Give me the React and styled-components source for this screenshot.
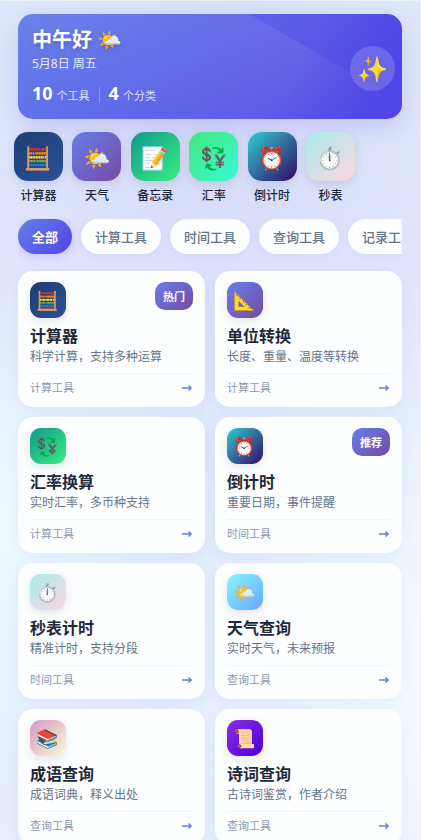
import React, { useState } from "react";
import styled, { createGlobalStyle } from "styled-components";

const GlobalStyle = createGlobalStyle`
  *, *::before, *::after { box-sizing: border-box; }
  html { scrollbar-width: none; }
  body {
    margin: 0;
    font-family: "Noto Sans", "Noto Sans CJK SC", "Noto Color Emoji", sans-serif;
    color: #1e293b;
    background: #e3e9fb;
  }
  button, a { font: inherit; color: inherit; }
`;

const Page = styled.main`
  display: flex;
  flex-direction: column;
  min-height: 100vh;
  padding: 13px 18px 0;
  border-top: 1px solid #eef1f8;
  border-right: 1px solid #eef1f8;
  background:
    radial-gradient(circle at 50% 15%, rgba(200, 205, 246, 0.45), transparent 210px),
    radial-gradient(ellipse at 0% 62%, rgba(238, 250, 255, 0.95), transparent 220px),
    radial-gradient(ellipse at 100% 80%, rgba(244, 252, 255, 0.95), transparent 260px),
    linear-gradient(180deg, #dde7f8 0%, #dfe3fc 28%, #e0eafc 55%, #e8eefd 100%);
`;

const Banner = styled.header`
  display: flex;
  align-items: center;
  justify-content: space-between;
  padding: 14px 7px 11px 14px;
  border-radius: 15px;
  color: #fff;
  background:
    linear-gradient(120deg, rgba(79, 70, 229, 0) 70%, rgba(79, 70, 229, 0.9) 92%),
    linear-gradient(210deg, transparent 27%, rgba(255, 255, 255, 0.07) 27%, rgba(255, 255, 255, 0.03) 65%, transparent 90%),
    linear-gradient(135deg, #667eea 0%, #4f46e5 100%);
  box-shadow: 0 8px 24px rgba(99, 102, 241, 0.2);
`;

const Greeting = styled.h1`
  margin: 0;
  font-size: 20px;
  line-height: 24px;
  font-weight: 700;
  text-shadow: 0 2px 4px rgba(0, 0, 0, 0.15);
`;

const DateLine = styled.p`
  margin: 2px 0 7px;
  font-size: 12px;
  line-height: 20px;
  color: rgba(255, 255, 255, 0.88);
`;

const Stats = styled.div`
  display: flex;
  align-items: center;
  gap: 9px;
  line-height: 24px;
`;

const Stat = styled.span`
  display: flex;
  align-items: baseline;
  gap: 4px;
  font-size: 11px;
  color: rgba(255, 255, 255, 0.8);
  strong { font-size: 18px; color: #fff; }
`;

const StatDivider = styled.span`
  width: 1px;
  height: 16px;
  background: rgba(255, 255, 255, 0.3);
`;

const Sparkle = styled.span`
  display: grid;
  place-items: center;
  width: 45px;
  height: 45px;
  border-radius: 50%;
  font-size: 25px;
  line-height: 1;
  background: rgba(255, 255, 255, 0.17);
`;

const Shortcuts = styled.nav`
  display: flex;
  flex: none;
  justify-content: space-between;
  max-width: 341px;
  margin: 13px 0 0 -4px;
`;

const Shortcut = styled.a`
  display: flex;
  flex-direction: column;
  align-items: center;
  gap: 6px;
  width: 49px;
  font-size: 12px;
  line-height: 18px;
  font-weight: 500;
  text-decoration: none;
  white-space: nowrap;
`;

const IconTile = styled.span`
  display: grid;
  place-items: center;
  width: ${(p) => (p.$large ? 49 : 36)}px;
  height: ${(p) => (p.$large ? 49 : 36)}px;
  border-radius: ${(p) => (p.$large ? 14 : 11)}px;
  font-size: ${(p) => (p.$large ? 22 : 18)}px;
  line-height: 1;
  background: linear-gradient(135deg, ${(p) => p.$from}, ${(p) => p.$to});
  box-shadow: 0 3px 10px rgba(30, 41, 59, 0.12);
`;

const Tabs = styled.div`
  display: flex;
  flex: none;
  gap: 9px;
  margin-top: 14px;
  padding-bottom: 17px;
  overflow: auto hidden;
  scrollbar-width: none;
`;

const Tab = styled.button`
  flex: none;
  height: 35px;
  padding: 0 14px;
  border: 0;
  border-radius: 18px;
  font-size: 13px;
  line-height: 20px;
  font-weight: ${(p) => (p.$active ? 700 : 500)};
  color: ${(p) => (p.$active ? "#fff" : "#64748b")};
  background: ${(p) => (p.$active ? "linear-gradient(135deg, #667eea, #4f46e5)" : "#fdfeff")};
  box-shadow: 0 2px 8px rgba(99, 102, 241, ${(p) => (p.$active ? 0.25 : 0.06)});
  cursor: pointer;
`;

const Grid = styled.section`
  display: grid;
  grid-template-columns: repeat(2, minmax(0, 1fr));
  gap: 10px;
`;

const Card = styled.a`
  display: flex;
  flex-direction: column;
  padding: 11px 12px 9px;
  border-radius: 15px;
  text-decoration: none;
  background: #fdfeff;
  box-shadow: 0 4px 14px rgba(99, 102, 241, 0.08);
`;

const CardTop = styled.div`
  display: flex;
  align-items: flex-start;
  justify-content: space-between;
`;

const Badge = styled.span`
  padding: 6px 8px 4px;
  border-radius: 10px;
  font-size: 11px;
  line-height: 18px;
  font-weight: 700;
  color: #fff;
  background: linear-gradient(135deg, #667eea, #764ba2);
`;

const CardTitle = styled.h2`
  margin: 7px 0 0;
  font-size: 16px;
  line-height: 22px;
  font-weight: 700;
`;

const CardText = styled.p`
  margin: 0;
  font-size: 12px;
  line-height: 20px;
  color: #64748b;
  white-space: nowrap;
`;

const CardFooter = styled.div`
  display: flex;
  align-items: center;
  justify-content: space-between;
  margin-top: 6px;
  padding-top: 4px;
  border-top: 1px solid #f1f5fb;
  font-size: 11px;
  line-height: 20px;
  color: #8b9ab0;
`;

const Arrow = styled.svg`
  width: 12px;
  height: 12px;
  color: #667eea;
`;

const shortcuts = [
  ["计算器", "🧮", "#1e3c72", "#2a5298"],
  ["天气", "🌤️", "#667eea", "#764ba2"],
  ["备忘录", "📝", "#11998e", "#38ef7d"],
  ["汇率", "💱", "#43e97b", "#38f9d7"],
  ["倒计时", "⏰", "#30cfd0", "#330867"],
  ["秒表", "⏱️", "#a8edea", "#fed6e3"],
];

const categories = ["全部", "计算工具", "时间工具", "查询工具", "记录工具"];

const tools = [
  { name: "计算器", text: "科学计算，支持多种运算", type: "计算工具", icon: "🧮", from: "#1e3c72", to: "#2a5298", badge: "热门" },
  { name: "单位转换", text: "长度、重量、温度等转换", type: "计算工具", icon: "📐", from: "#667eea", to: "#764ba2" },
  { name: "汇率换算", text: "实时汇率，多币种支持", type: "计算工具", icon: "💱", from: "#11998e", to: "#38ef7d" },
  { name: "倒计时", text: "重要日期，事件提醒", type: "时间工具", icon: "⏰", from: "#30cfd0", to: "#330867", badge: "推荐" },
  { name: "秒表计时", text: "精准计时，支持分段", type: "时间工具", icon: "⏱️", from: "#a8edea", to: "#fed6e3" },
  { name: "天气查询", text: "实时天气，未来预报", type: "查询工具", icon: "🌤️", from: "#89f7fe", to: "#66a6ff" },
  { name: "成语查询", text: "成语词典，释义出处", type: "查询工具", icon: "📚", from: "#d299c2", to: "#fef9d7" },
  { name: "诗词查询", text: "古诗词鉴赏，作者介绍", type: "查询工具", icon: "📜", from: "#8e2de2", to: "#4a00e0" },
];

export default function App() {
  const [active, setActive] = useState("全部");
  const shown = active === "全部" ? tools : tools.filter((t) => t.type === active);
  return (
    <>
      <GlobalStyle />
      <Page>
        <Banner>
          <div>
            <Greeting>中午好 🌤️</Greeting>
            <DateLine>5月8日 周五</DateLine>
            <Stats>
              <Stat><strong>10</strong>个工具</Stat>
              <StatDivider />
              <Stat><strong>4</strong>个分类</Stat>
            </Stats>
          </div>
          <Sparkle>✨</Sparkle>
        </Banner>
        <Shortcuts>
          {shortcuts.map(([label, icon, from, to]) => (
            <Shortcut key={label} href="#">
              <IconTile $large $from={from} $to={to}>{icon}</IconTile>
              {label}
            </Shortcut>
          ))}
        </Shortcuts>
        <Tabs>
          {categories.map((c) => (
            <Tab key={c} type="button" $active={c === active} aria-pressed={c === active} onClick={() => setActive(c)}>
              {c}
            </Tab>
          ))}
        </Tabs>
        <Grid>
          {shown.map((t) => (
            <Card key={t.name} href="#">
              <CardTop>
                <IconTile $from={t.from} $to={t.to}>{t.icon}</IconTile>
                {t.badge && <Badge>{t.badge}</Badge>}
              </CardTop>
              <CardTitle>{t.name}</CardTitle>
              <CardText>{t.text}</CardText>
              <CardFooter>
                {t.type}
                <Arrow viewBox="0 0 12 12" fill="none" stroke="currentColor" strokeWidth="1.4" aria-hidden="true">
                  <path d="M1 6h9M7.4 3.4L10.2 6 7.4 8.6" />
                </Arrow>
              </CardFooter>
            </Card>
          ))}
        </Grid>
      </Page>
    </>
  );
}
